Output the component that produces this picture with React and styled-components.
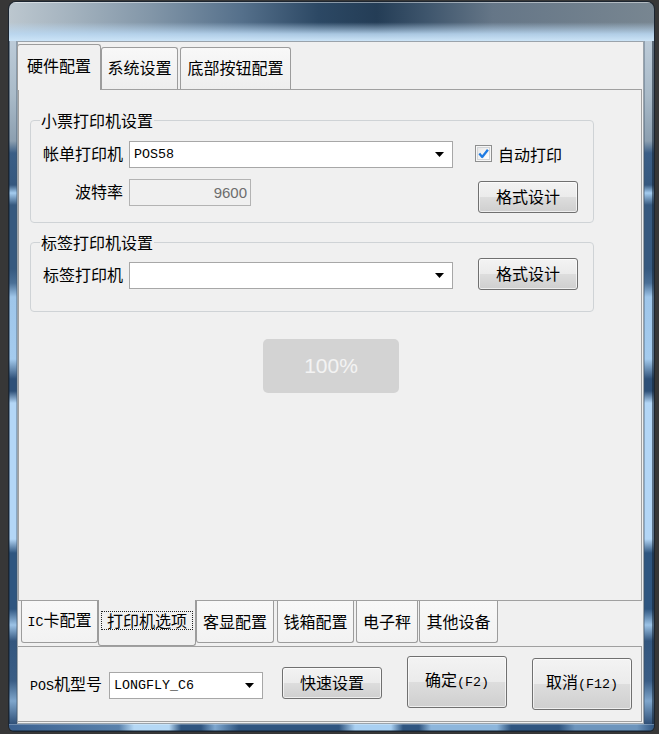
import React from "react";
import styled, { createGlobalStyle } from "styled-components";

const CJK = `"Noto Sans CJK SC", "Noto Sans", sans-serif`;

const GlobalStyle = createGlobalStyle`
  html, body { margin: 0; padding: 0; }
  body { background: #373737; font-family: ${CJK}; }
  * { box-sizing: border-box; }
`;

const Desktop = styled.div`
  width: 659px;
  height: 734px;
  padding: 2px 0 0 9px;
  background: #373737;
  overflow: hidden;
`;

const Window = styled.div`
  width: 645px;
  height: 729px;
  display: flex;
  flex-direction: column;
  border-radius: 7px 7px 5px 5px;
  overflow: hidden;
  box-shadow: 0 0 0 1px #1c2530;
`;

const TitleBar = styled.div`
  height: 39px;
  flex: none;
  background:
    linear-gradient(to bottom, rgba(200,226,246,0) 0%, rgba(200,226,246,0) 52%, rgba(186,216,242,0.88) 82%, rgba(204,228,247,1) 100%),
    linear-gradient(to right, #bcc7cf 0%, #a3b2be 10%, #8296a8 22%, #55708b 36%, #2c4864 48%, #243d56 57%, #3f566d 65%, #657687 75%, #788691 100%);
  box-shadow: inset 0 1px 0 rgba(255,255,255,0.45);
`;

const Middle = styled.div`
  display: flex;
  height: 683px;
  flex: none;
`;

const SideEdge = styled.div`
  width: ${(p) => p.$w}px;
  flex: none;
  background: linear-gradient(to bottom,
    #bccbd8 0px, #a9bac8 55px, #8c9fb0 100px, #3b5e86 112px, #35587f 144px,
    #a5cdf0 152px, #36597f 164px, #36597f 228px, #4a6f96 242px,
    #9fc6ea 256px, #a4cbee 318px, #2e5078 338px, #2e5078 350px,
    #b3d6f6 362px, #b3d6f6 498px, #2f5680 512px, #2f5680 568px,
    #9cc3e6 584px, #33567e 600px, #3a5d85 640px, #7fa6cc 660px, #2f5078 683px);
  box-shadow: ${(p) =>
    p.$left
      ? "inset 1px 0 0 rgba(20,35,50,0.45), inset -1px 0 0 rgba(60,80,100,0.35)"
      : "inset -2px 0 0 rgba(20,35,50,0.55), inset 1px 0 0 rgba(60,80,100,0.35)"};
`;

const BottomEdge = styled.div`
  height: 7px;
  flex: none;
  background: linear-gradient(to right,
    #3b6190 0px, #5a82ac 110px, #b5d8f5 125px, #b5d8f5 160px, #2f5580 172px,
    #2f5580 192px, #7fa8d0 206px, #2f5580 230px, #2f5580 330px,
    #a9d0f2 346px, #a9d0f2 382px, #2f5580 394px, #2f5580 410px,
    #8db6dc 422px, #8db6dc 488px, #2f5580 502px, #2f5580 550px,
    #6d95bd 566px, #6d95bd 628px, #2f5580 645px);
  box-shadow: inset 0 -1px 0 rgba(20,35,50,0.5), inset 0 1px 0 rgba(255,255,255,0.25);
`;

const Client = styled.div`
  width: 627px;
  height: 683px;
  border: 1px solid #9aa3ab;
  background: #f0f0f0;
  display: flex;
  flex-direction: column;
`;

const TopTabRow = styled.div`
  display: flex;
  align-items: flex-end;
  height: 47px;
  flex: none;
`;

const TopTab = styled.div`
  width: ${(p) => p.$w}px;
  margin-left: ${(p) => p.$ml || 0}px;
  height: ${(p) => (p.$active ? 46 : 42)}px;
  margin-bottom: ${(p) => (p.$active ? -1 : 0)}px;
  padding-bottom: ${(p) => (p.$active ? 5 : 3)}px;
  position: relative;
  z-index: ${(p) => (p.$active ? 2 : 1)};
  border: 1px solid #9c9c9c;
  border-bottom: none;
  border-radius: 3px 3px 0 0;
  background: ${(p) => (p.$active ? "#f0f0f0" : "linear-gradient(to bottom, #f8f8f8, #eeeeee)")};
  display: flex;
  align-items: center;
  justify-content: center;
  font-size: 16px;
  line-height: 18px;
  color: #000;
  white-space: nowrap;
`;

const Page = styled.div`
  height: 512px;
  flex: none;
  margin-right: 1px;
  border: 1px solid #a0a0a0;
  padding: 21px 0 0 11px;
  display: flex;
  flex-direction: column;
  align-items: flex-start;
`;

const Group = styled.fieldset`
  width: 564px;
  margin: ${(p) => p.$mt || 0}px 0 0 0;
  padding: 0;
  border: 1px solid #cfd3d6;
  border-radius: 4px;
  min-inline-size: 0;
`;

const Legend = styled.legend`
  margin-left: 9px;
  padding: 0 1px;
  font-size: 16px;
  line-height: 18px;
  color: #000;
`;

const GroupBody = styled.div`
  padding: ${(p) => p.$pt}px 15px ${(p) => p.$pb}px 9px;
  display: flex;
  flex-direction: column;
`;

const Row = styled.div`
  display: flex;
  align-items: flex-start;
  margin-top: ${(p) => p.$mt || 0}px;
`;

const FieldLabel = styled.div`
  width: ${(p) => (p.$w ? `${p.$w}px` : "auto")};
  height: 27px;
  margin-top: ${(p) => p.$mt || 0}px;
  margin-right: ${(p) => (p.$mr === undefined ? 6 : p.$mr)}px;
  padding-bottom: 2px;
  text-align: right;
  font-size: 16px;
  line-height: 25px;
  color: #000;
  white-space: nowrap;
`;

const Latin = styled.span`
  font-family: "Liberation Mono", "Courier New", monospace;
  font-size: 13.33px;
`;

const Combo = styled.div`
  width: ${(p) => p.$w}px;
  height: 27px;
  margin-top: ${(p) => p.$mt || 0}px;
  margin-left: ${(p) => p.$ml || 0}px;
  border: 1px solid #a7a7a7;
  background: #fff;
  display: flex;
  align-items: center;
  justify-content: space-between;
  padding: 0 8px 0 4px;
  font-family: "Liberation Mono", "Courier New", monospace;
  font-size: 13.33px;
  color: #000;
`;

const ArrowSvg = styled.svg`
  display: block;
  flex: none;
`;

const Arrow = () => (
  <ArrowSvg width="9" height="5" viewBox="0 0 9 5">
    <polygon points="0,0 9,0 4.5,5" fill="#000" />
  </ArrowSvg>
);

const TextBox = styled.div`
  width: 122px;
  height: 27px;
  border: 1px solid #b3b3b3;
  background: #f0f0f0;
  padding-right: 3px;
  text-align: right;
  font-family: "Liberation Sans", Arial, sans-serif;
  font-size: 15px;
  line-height: 25px;
  color: #6d6d6d;
`;

const Check = styled.label`
  display: flex;
  align-items: center;
  gap: 6px;
  margin-left: 22px;
  height: 25px;
  font-size: 16px;
  line-height: 18px;
  color: #000;
  white-space: nowrap;
`;

const CheckSvg = styled.svg`
  display: block;
  flex: none;
`;

const CheckIcon = () => (
  <CheckSvg width="17" height="17" viewBox="0 0 17 17">
    <defs>
      <linearGradient id="cbg" x1="0" y1="0" x2="1" y2="1">
        <stop offset="0" stopColor="#e6e6e6" />
        <stop offset="1" stopColor="#ffffff" />
      </linearGradient>
    </defs>
    <rect x="0.5" y="0.5" width="16" height="16" fill="#f6f6f6" stroke="#8e8f8f" />
    <rect x="2.5" y="2.5" width="12" height="12" fill="url(#cbg)" stroke="#d2d5d8" />
    <path d="M4.3 8.6 L7.2 12 L12.9 4.8" fill="none" stroke="#1e7be3" strokeWidth="2.3" strokeLinejoin="round" />
  </CheckSvg>
);

const Button = styled.button`
  width: ${(p) => p.$w || 100}px;
  height: ${(p) => p.$h || 32}px;
  flex: none;
  margin-top: ${(p) => p.$mt || 0}px;
  margin-left: ${(p) => (p.$ml === "auto" ? "auto" : `${p.$ml || 0}px`)};
  padding: 0 0 2px 0;
  border: 1px solid #707070;
  border-radius: 3px;
  background: linear-gradient(to bottom, #f3f3f3 0%, #ebebeb 50%, #dddddd 51%, #cfcfcf 100%);
  box-shadow: inset 0 0 0 1px rgba(255, 255, 255, 0.65);
  font-family: ${CJK};
  font-size: 16px;
  line-height: 18px;
  color: #000;
  white-space: nowrap;
`;

const Progress = styled.div`
  width: 136px;
  height: 54px;
  margin: 27px 0 0 233px;
  border-radius: 5px;
  background: #d3d3d3;
  display: flex;
  align-items: center;
  justify-content: center;
  font-family: "Liberation Sans", Arial, sans-serif;
  font-size: 21px;
  color: #f3f3f3;
`;

const BottomTabRow = styled.div`
  display: flex;
  align-items: flex-start;
  height: 45px;
  flex: none;
  padding-left: 3px;
`;

const BottomTab = styled.div`
  width: ${(p) => p.$w}px;
  margin-left: ${(p) => p.$ml || 0}px;
  height: ${(p) => (p.$active ? 46 : 42)}px;
  margin-top: ${(p) => (p.$active ? -1 : 0)}px;
  padding-bottom: ${(p) => (p.$active ? 5 : 2)}px;
  position: relative;
  z-index: ${(p) => (p.$active ? 2 : 1)};
  border: 1px solid #9c9c9c;
  border-top: none;
  border-radius: 0 0 3px 3px;
  background: ${(p) => (p.$active ? "#f0f0f0" : "linear-gradient(to bottom, #f8f8f8, #f2f2f2)")};
  display: flex;
  align-items: center;
  justify-content: center;
  font-size: 16px;
  line-height: 18px;
  color: #000;
  white-space: nowrap;
`;

const Focus = styled.span`
  border: 1px dotted #222;
  padding: 0 5px;
  line-height: 17px;
`;

const Panel = styled.div`
  height: 76px;
  flex: none;
  margin: 0 1px 1px 0;
  border: 1px solid #a0a0a0;
  border-left: none;
  padding-left: 12px;
  display: flex;
  align-items: flex-start;
`;

export default function App() {
  return (
    <>
      <GlobalStyle />
      <Desktop>
        <Window>
          <TitleBar />
          <Middle>
            <SideEdge $w={8} $left />
            <Client>
              <TopTabRow>
                <TopTab $active $w={84} $ml={-1}>硬件配置</TopTab>
                <TopTab $w={77}>系统设置</TopTab>
                <TopTab $w={111} $ml={2}>底部按钮配置</TopTab>
              </TopTabRow>
              <Page>
                <Group>
                  <Legend>小票打印机设置</Legend>
                  <GroupBody $pt={12} $pb={9}>
                    <Row>
                      <FieldLabel $w={83}>帐单打印机</FieldLabel>
                      <Combo $w={324}>
                        <span>POS58</span>
                        <Arrow />
                      </Combo>
                      <Check>
                        <CheckIcon />
                        <span>自动打印</span>
                      </Check>
                    </Row>
                    <Row $mt={11}>
                      <FieldLabel $w={83}>波特率</FieldLabel>
                      <TextBox>9600</TextBox>
                      <Button $mt={2} $ml="auto">格式设计</Button>
                    </Row>
                  </GroupBody>
                </Group>
                <Group $mt={10}>
                  <Legend>标签打印机设置</Legend>
                  <GroupBody $pt={7} $pb={21}>
                    <Row>
                      <FieldLabel $w={83} $mt={4}>标签打印机</FieldLabel>
                      <Combo $w={324} $mt={4}>
                        <span />
                        <Arrow />
                      </Combo>
                      <Button $ml="auto">格式设计</Button>
                    </Row>
                  </GroupBody>
                </Group>
                <Progress>100%</Progress>
              </Page>
              <BottomTabRow>
                <BottomTab $w={77}>
                  <span>
                    <Latin>IC</Latin>卡配置
                  </span>
                </BottomTab>
                <BottomTab $active $w={98}>
                  <Focus>打印机选项</Focus>
                </BottomTab>
                <BottomTab $w={78}>客显配置</BottomTab>
                <BottomTab $w={77} $ml={3}>钱箱配置</BottomTab>
                <BottomTab $w={62} $ml={2}>电子秤</BottomTab>
                <BottomTab $w={79} $ml={1}>其他设备</BottomTab>
              </BottomTabRow>
              <Panel>
                <FieldLabel $mt={24} $mr={7}>
                  <Latin>POS</Latin>机型号
                </FieldLabel>
                <Combo $w={154} $mt={25}>
                  <span>LONGFLY_C6</span>
                  <Arrow />
                </Combo>
                <Button $mt={20} $ml={19}>快速设置</Button>
                <Button $h={52} $mt={9} $ml={25}>
                  确定<Latin>(F2)</Latin>
                </Button>
                <Button $h={52} $mt={11} $ml={25}>
                  取消<Latin>(F12)</Latin>
                </Button>
              </Panel>
            </Client>
            <SideEdge $w={10} />
          </Middle>
          <BottomEdge />
        </Window>
      </Desktop>
    </>
  );
}
